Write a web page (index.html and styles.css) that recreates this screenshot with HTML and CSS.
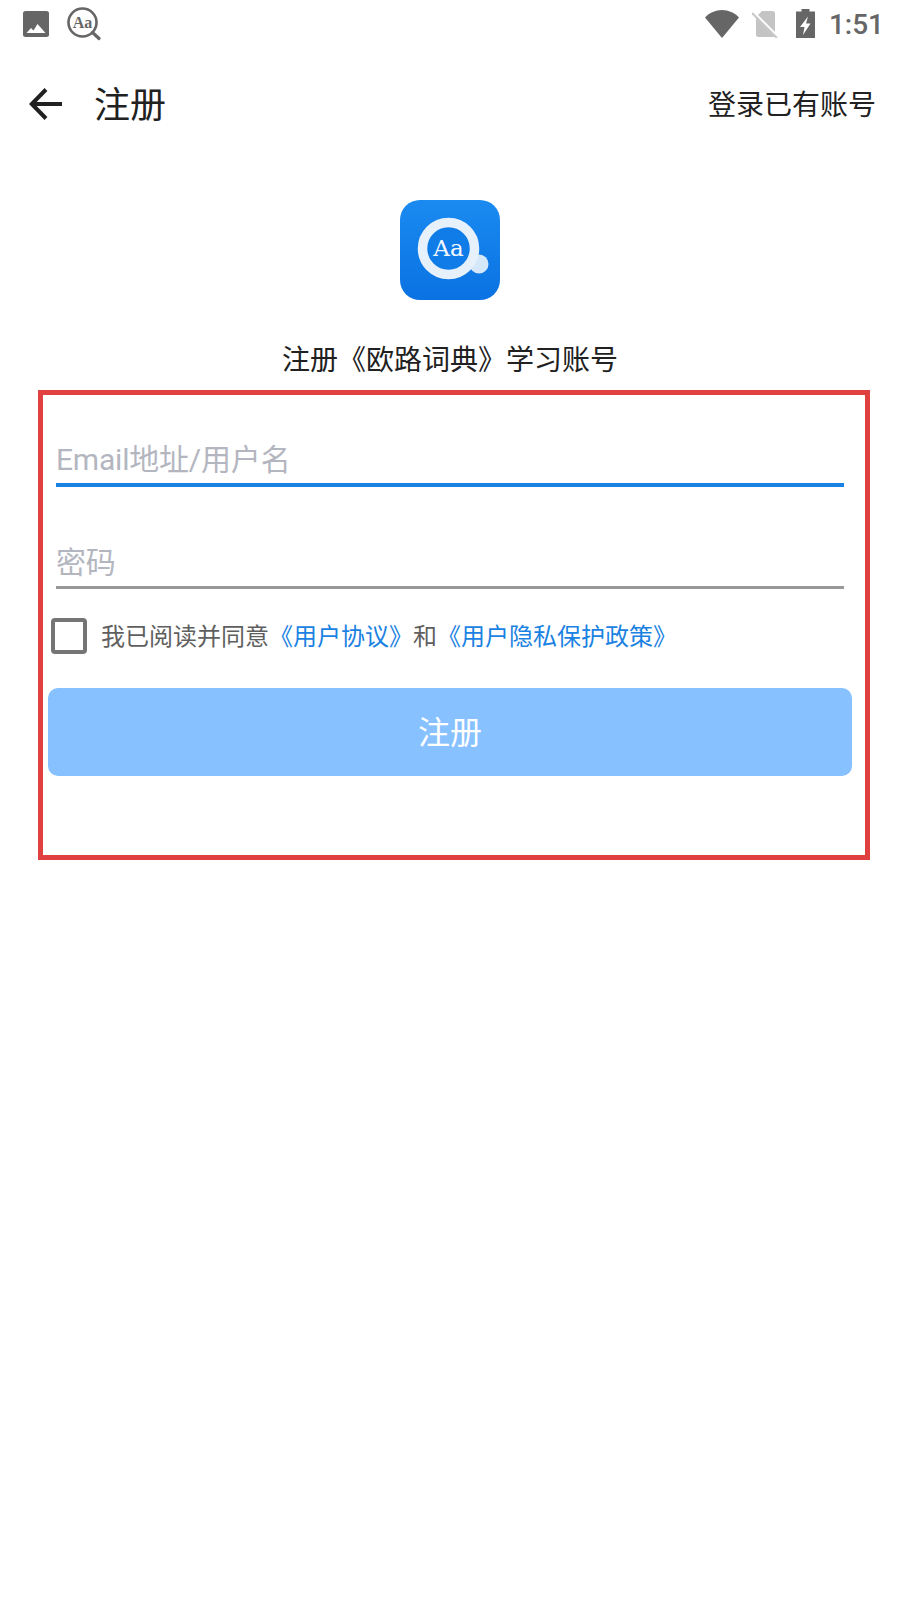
FILE: index.html
```html
<!DOCTYPE html>
<html lang="zh-CN">
<head>
<meta charset="utf-8">
<title>注册</title>
<link rel="stylesheet" href="styles.css">
</head>
<body>
<div class="status">
  <div class="status-left">
    <svg class="ic-image" width="28" height="28" viewBox="0 0 28 28"><rect width="26" height="26" x="1" y="1" rx="2.500" fill="#666"/><path d="M4.500 23l4.500-5 2.500 2.500L15.500 14 23.500 23z" fill="#fff"/></svg>
    <svg class="ic-aa" width="36" height="36" viewBox="0 0 36 36"><circle cx="15.500" cy="15.500" r="14" fill="none" stroke="#666" stroke-width="2.600"/><path d="M25.500 25.500l6.500 6" stroke="#666" stroke-width="3.200" stroke-linecap="round"/><text x="15.500" y="20.500" class="aa-small">Aa</text></svg>
  </div>
  <div class="status-right">
    <svg class="ic-wifi" width="34" height="28" viewBox="0 0 34 28"><path d="M0 7.500C4.500 2.800 10.500 0 17 0s12.500 2.800 17 7.500L17 28z" fill="#666"/></svg>
    <svg class="ic-sim" width="26" height="27" viewBox="0 0 26 27"><path d="M10 0h10.500a2.500 2.500 0 0 1 2.500 2.500V26H6.500A2.500 2.500 0 0 1 4 23.500V6z" fill="#c4c4c4"/><path d="M0 0l25 25" stroke="#fff" stroke-width="3"/><path d="M0 2l25 25" stroke="#c8c8c8" stroke-width="2"/></svg>
    <svg class="ic-bat" width="19" height="29" viewBox="0 0 19 29"><path d="M5.500 0h8v2.500H19V29H0V2.500h5.500z" fill="#666"/><path d="M12 7.500L4 18h4.500L7 26l7.500-11.500H10z" fill="#fff"/></svg>
    <span class="time">1:51</span>
  </div>
</div>

<header class="toolbar">
  <div class="toolbar-left">
    <svg width="34" height="34" viewBox="0 0 34 34"><path d="M17 2.500L2.800 17 17 31.500M3 17h30" fill="none" stroke="#212121" stroke-width="4"/></svg>
    <span class="title">注册</span>
  </div>
  <span class="login">登录已有账号</span>
</header>

<main class="content">
  <svg class="logo" width="100" height="100" viewBox="0 0 100 100">
    <defs><linearGradient id="lg" x1="0" y1="0" x2="0" y2="1"><stop offset="0" stop-color="#1a8af0"/><stop offset="1" stop-color="#0a72e2"/></linearGradient></defs>
    <rect width="100" height="100" rx="20" fill="url(#lg)"/>
    <circle cx="79" cy="64" r="9.500" fill="#d5e8fa"/>
    <circle cx="48.500" cy="48.500" r="26" fill="#0f7ce8" stroke="#e6f1fc" stroke-width="9.500"/>
    <text x="48.500" y="56" class="aa-logo">Aa</text>
  </svg>
  <p class="subtitle">注册《欧路词典》学习账号</p>

  <section class="form-box">
    <div class="field field-active"><span class="placeholder">Email地址/用户名</span></div>
    <div class="field field-pass"><span class="placeholder">密码</span></div>
    <div class="agree">
      <span class="checkbox"></span>
      <span class="agree-text">我已阅读并同意<a class="link">《用户协议》</a>和<a class="link">《用户隐私保护政策》</a></span>
    </div>
    <div class="button">注册</div>
  </section>
</main>
</body>
</html>
```

FILE: styles.css
```css
* { box-sizing: border-box; }
html, body { margin: 0; padding: 0; background: #fff; }
body {
  width: 900px;
  height: 1600px;
  overflow: hidden;
  font-family: Roboto, "Noto Sans CJK SC", sans-serif;
  color: #212121;
}
svg { display: block; flex: none; }

.status {
  height: 50px;
  display: flex;
  justify-content: space-between;
  align-items: flex-start;
  padding: 9px 16px 0 22px;
}
.status-left { display: flex; align-items: flex-start; gap: 17px; }
.ic-image { margin-top: 1px; }
.ic-aa { margin-top: -2px; }
.aa-small { font-family: "Liberation Serif", serif; font-size: 16px; font-weight: 700; fill: #666; text-anchor: middle; }
.aa-logo { font-family: "DejaVu Serif", serif; font-size: 23px; fill: #f4f8fe; text-anchor: middle; }
.status-right { display: flex; align-items: flex-start; }
.ic-wifi { margin-top: 1px; }
.ic-sim { margin: 2px 0 0 13px; }
.ic-bat { margin-left: 18px; }
.time { font-size: 28px; font-weight: 500; color: #666; line-height: 30px; margin: 1px 0 0 14px; }

.toolbar {
  height: 108px;
  display: flex;
  justify-content: space-between;
  align-items: center;
  padding: 0 24px 0 29px;
}
.toolbar-left { display: flex; align-items: center; gap: 31px; }
.title { font-size: 36px; line-height: 44px; padding-top: 4px; }
.login { font-size: 28px; line-height: 36px; padding-top: 4px; }

.content { display: flex; flex-direction: column; align-items: center; padding: 42px 0 0; }
.subtitle { margin: 41px 0 0; font-size: 28px; line-height: 40px; color: #212121; }

.form-box {
  margin: 9px 0 0 38px;
  align-self: flex-start;
  width: 832px;
  height: 470px;
  border: 5px solid #e04040;
  padding: 0 21px 0 5px;
  display: flex;
  flex-direction: column;
}
.field { height: 50px; display: flex; align-items: center; margin-left: 8px; }
.field-active { margin-top: 42px; border-bottom: 4px solid #1a82e2; }
.field-pass { margin-top: 52px; border-bottom: 3px solid #999; }
.placeholder { font-size: 30px; letter-spacing: -0.2px; color: #b4b6bf; line-height: 46px; }
.agree { display: flex; align-items: center; height: 36px; margin-top: 29px; margin-left: 3px; gap: 14px; }
.checkbox { width: 36px; height: 36px; border: 4px solid #757575; border-radius: 4px; flex: none; }
.agree-text { font-size: 24px; line-height: 36px; color: #5f5f5f; padding-top: 2px; }
.link { color: #1a82e2; }
.button {
  margin-top: 34px;
  height: 88px;
  width: 804px;
  background: #87c1ff;
  border-radius: 10px;
  display: flex;
  align-items: center;
  justify-content: center;
  font-size: 32px;
  color: #fff;
  padding-bottom: 4px;
}
```
